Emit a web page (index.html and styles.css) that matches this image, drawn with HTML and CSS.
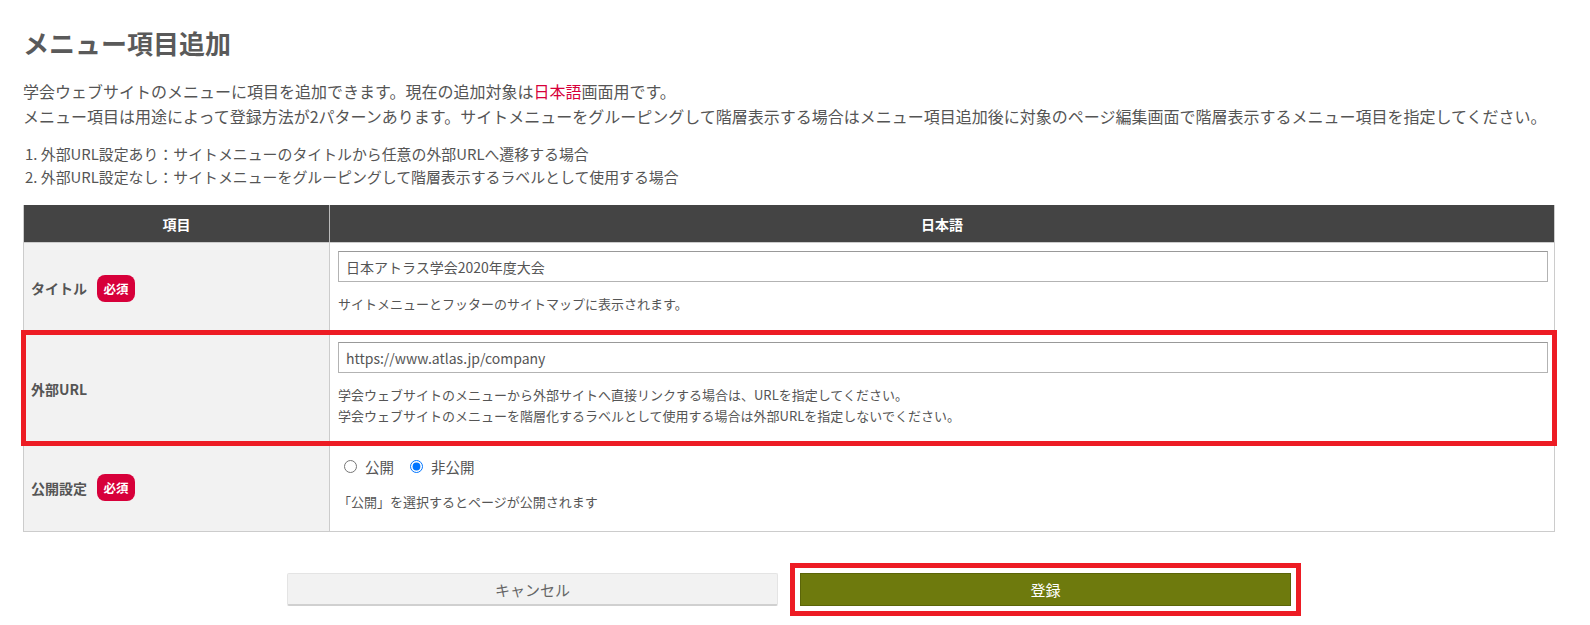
FILE: index.html
```html
<!DOCTYPE html>
<html lang="ja">
<head>
  <meta charset="UTF-8">
  <meta name="viewport" content="width=device-width, initial-scale=1.0">
  <title>メニュー項目追加</title>
  <link rel="stylesheet" href="styles.css">
</head>
<body>

<div class="page">
  <h1 class="page-title">メニュー項目追加</h1>

  <p class="lead">
    学会ウェブサイトのメニューに項目を追加できます。現在の追加対象は<span class="lang">日本語</span>画面用です。<br>
    メニュー項目は用途によって登録方法が2パターンあります。サイトメニューをグルーピングして階層表示する場合はメニュー項目追加後に対象のページ編集画面で階層表示するメニュー項目を指定してください。
  </p>

  <ol class="patterns">
    <li>外部URL設定あり：サイトメニューのタイトルから任意の外部URLへ遷移する場合</li>
    <li>外部URL設定なし：サイトメニューをグルーピングして階層表示するラベルとして使用する場合</li>
  </ol>

  <div class="form-table">
    <div class="row head">
      <div class="cell label">項目</div>
      <div class="cell value">日本語</div>
    </div>

    <div class="row">
      <div class="cell label">タイトル <span class="required">必須</span></div>
      <div class="cell value">
        <input type="text" class="text-input" value="日本アトラス学会2020年度大会">
        <p class="help">サイトメニューとフッターのサイトマップに表示されます。</p>
      </div>
    </div>

    <div class="row marked">
      <div class="cell label">外部URL</div>
      <div class="cell value">
        <input type="text" class="text-input" value="https://www.atlas.jp/company">
        <p class="help">学会ウェブサイトのメニューから外部サイトへ直接リンクする場合は、URLを指定してください。<br>
        学会ウェブサイトのメニューを階層化するラベルとして使用する場合は外部URLを指定しないでください。</p>
      </div>
    </div>

    <div class="row">
      <div class="cell label">公開設定 <span class="required">必須</span></div>
      <div class="cell value">
        <div class="radios">
          <label><input type="radio" name="publish"> 公開</label>
          <label><input type="radio" name="publish" checked> 非公開</label>
        </div>
        <p class="help">「公開」を選択するとページが公開されます</p>
      </div>
    </div>
  </div>

  <div class="actions">
    <button class="btn cancel">キャンセル</button>
    <span class="marked-box"><button class="btn submit">登録</button></span>
  </div>
</div>

</body>
</html>
```

FILE: styles.css
```css
body {
  margin: 0;
  font-family: "Noto Sans CJK JP", "Noto Sans", sans-serif;
  color: #555;
  background: #fff;
}

.page {
  padding: 27px 35px 19px 23px;
}

.page-title {
  margin: 0;
  font-size: 26px;
  line-height: 32px;
  font-weight: bold;
  color: #5a5a5a;
}

.lead {
  margin: 20px 0 0;
  font-size: 16px;
  line-height: 25px;
}

.lead .lang {
  color: #d7003a;
}

.patterns {
  margin: 14px 0 0 2px;
  padding: 0;
  list-style-position: inside;
  font-size: 14.9px;
  line-height: 22.5px;
}

/* table */
.form-table {
  margin-top: 17px;
  border: 1px solid #ccc;
  border-top: none;
}

.row {
  display: grid;
  grid-template-columns: 306px 1fr;
  border-top: 1px solid #ccc;
}

.cell.label {
  display: flex;
  align-items: center;
  padding-left: 7px;
  background: #f2f2f2;
  border-right: 1px solid #ccc;
  font-size: 14px;
  font-weight: bold;
}

.cell.value {
  padding: 8px 6px 19px 8px;
}

.row.head {
  background: #444;
  color: #fff;
  border-top: none;
  height: 37px;
  font-size: 14px;
  font-weight: bold;
}

.row.head .cell {
  display: flex;
  align-items: center;
  justify-content: center;
  padding: 0;
  background: none;
  border-right-color: #bbb;
}

.row.marked {
  outline: 5px solid #ed1c24;
  outline-offset: -2px;
  position: relative;
}

.row.marked .cell.value {
  padding-bottom: 17px;
}

.required {
  display: inline-flex;
  align-items: center;
  justify-content: center;
  width: 38px;
  height: 27px;
  margin-left: 10px;
  border-radius: 8px;
  background: #d7003a;
  color: #fff;
  font-size: 12.5px;
  font-weight: bold;
}

.text-input {
  display: block;
  box-sizing: border-box;
  width: 100%;
  height: 31px;
  padding: 0 7px;
  border: 1px solid #b3b3b3;
  border-top-color: #999;
  font-family: inherit;
  font-size: 14px;
  color: #555;
}

.help {
  margin: 11px 0 0;
  font-size: 13px;
  line-height: 21px;
}

.radios {
  display: flex;
  align-items: center;
  height: 28px;
  font-size: 14.5px;
}

.radios label {
  display: inline-flex;
  align-items: center;
}

.radios label + label {
  margin-left: 10px;
}

.radios input {
  width: 13px;
  height: 13px;
  margin: 0 8px 0 6px;
}

/* buttons */
.actions {
  display: flex;
  justify-content: center;
  align-items: flex-start;
  gap: 22px;
  margin-top: 41px;
}

/* red frame round the submit button, kept out of the layout */
.marked-box {
  display: flex;
  margin: -10px;
  padding: 5px;
  border: 5px solid #ed1c24;
}

.btn {
  width: 491px;
  height: 33px;
  font-family: inherit;
  font-size: 15px;
  border-radius: 2px;
}

.cancel {
  background: #f2f2f2;
  border: 1px solid #e4e4e4;
  border-bottom: 2px solid #d0d0d0;
  color: #666;
}

.submit {
  background: #6e7a0d;
  border: 1px solid #5b6509;
  border-radius: 0;
  color: #fff;
}
```
